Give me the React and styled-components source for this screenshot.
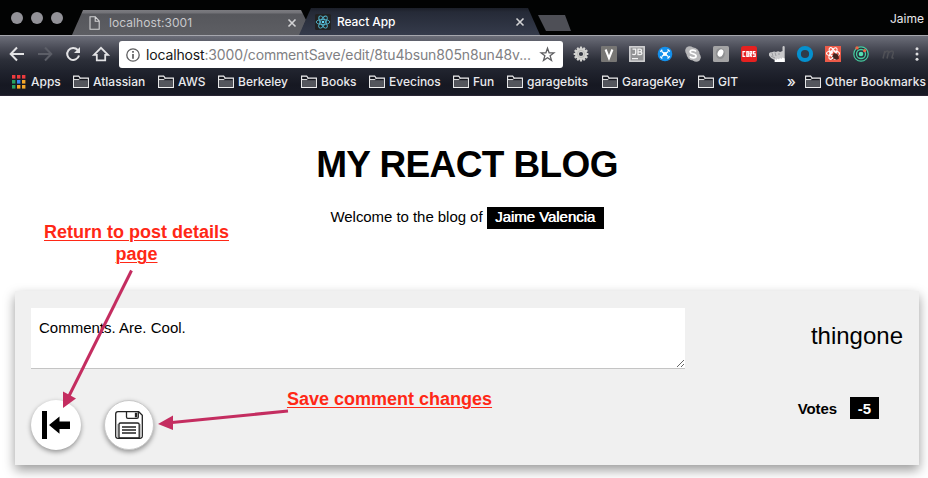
import React from "react";
import styled, { createGlobalStyle } from "styled-components";

const GlobalStyle = createGlobalStyle`
  * { box-sizing: border-box; }
  html, body { margin: 0; padding: 0; background: #fff; overflow: hidden; }
  body { font-family: "Liberation Sans", Arial, Helvetica, sans-serif; color: #000; }
`;

const Screen = styled.div`
  position: relative;
  width: 928px;
  height: 478px;
  overflow: hidden;
  background: #fff;
`;

const Browser = styled.header`
  height: 96px;
  font-family: Inter, "Noto Sans", sans-serif;
  color: #e9e9ec;
  background: #171923;
`;

const TabStrip = styled.div`
  display: flex;
  align-items: flex-end;
  height: 35px;
  padding-left: 11px;
  background: #020303;
`;

const WindowDots = styled.div`
  display: flex;
  gap: 8px;
  width: 61px;
  padding-bottom: 11px;
`;

const Dot = styled.span`
  width: 12px;
  height: 12px;
  border-radius: 50%;
  background: #929298;
`;

const Tab = styled.div`
  display: flex;
  align-items: center;
  flex: none;
  width: ${(p) => (p.$active ? 241 : 234)}px;
  height: ${(p) => (p.$active ? 27 : 25)}px;
  margin-left: ${(p) => (p.$active ? -7 : 0)}px;
  padding: 0 ${(p) => (p.$active ? "16px 0 16px" : "10px 0 17px")};
  color: ${(p) => (p.$active ? "#fff" : "#c8c8cb")};
  font-size: 12px;
  letter-spacing: ${(p) => p.$track}px;
  font-weight: ${(p) => (p.$active ? 500 : 400)};
  background: ${(p) =>
    p.$active
      ? "linear-gradient(#1b1f29 0, #252a37 4px, #353b4b 100%)"
      : "linear-gradient(#7b7b80 0, #727277 3px, #56575c 4px, #5d5e63 100%)"};
  clip-path: ${(p) =>
    p.$active
      ? "polygon(0 100%, 12px 0, 229px 0, 241px 100%)"
      : "polygon(0 100%, 11px 0, 229px 0, 234px 10px, 228px 100%)"};
`;

const TabTitle = styled.span`
  flex: 1;
  margin-left: ${(p) => p.$gap}px;
  line-height: 16px;
  white-space: nowrap;
`;

const NewTab = styled.span`
  width: 33px;
  height: 16px;
  margin: 0 0 4px -2px;
  background: #4e4f56;
  clip-path: polygon(0 0, 27px 0, 33px 100%, 8px 100%);
`;

const Profile = styled.span`
  margin: 0 4px 9px auto;
  font-size: 12px;
  line-height: 15px;
`;

const Toolbar = styled.div`
  display: flex;
  align-items: center;
  height: 35px;
  padding: 3px 3px 0 9px;
  border-top: 1px solid #a5a6ad;
  background: linear-gradient(#6c6e79, #4a4c57 35%, #2c2f39 70%, #22252f);
`;

const NavButtons = styled.div`
  display: flex;
  gap: 12px;
  width: 110px;
  margin-bottom: 1px;
`;

const AddressBar = styled.div`
  display: flex;
  align-items: center;
  width: 444px;
  height: 27px;
  padding: 0 8px 0 7px;
  border-radius: 3px;
  background: #fff;
  color: #808083;
`;

const Url = styled.span`
  flex: 1;
  margin-left: 6px;
  font-size: 14px;
  letter-spacing: ${(p) => p.$track}px;
  line-height: 20px;
  white-space: nowrap;
`;

const Host = styled.span`
  color: #161616;
`;

const Extensions = styled.div`
  display: flex;
  gap: 12px;
  margin: 0 0 1px 10px;
`;

const Bookmarks = styled.nav`
  display: flex;
  align-items: center;
  gap: 13px;
  height: 26px;
  padding: 0 0 2px 12px;
  font-size: 12px;
  font-weight: 500;
  background: linear-gradient(#21242f, #161822 60%, #181a25);
  border-bottom: 1px solid #292533;
`;

const Bookmark = styled.a`
  display: flex;
  align-items: center;
  flex: none;
  gap: ${(p) => p.$gap || 4}px;
  width: ${(p) => p.$width}px;
  letter-spacing: ${(p) => p.$track || 0}px;
  line-height: 16px;
  white-space: nowrap;
`;

const Chevrons = styled.span`
  margin-left: auto;
  margin-right: -4px;
  font-size: 15px;
  line-height: 16px;
`;

const Page = styled.main`
  display: flex;
  flex-direction: column;
  align-items: center;
  height: 382px;
  padding: 48px 9px 0 15px;
`;

const Title = styled.h1`
  margin: 0;
  font-size: 37px;
  font-weight: bold;
  line-height: 42px;
  letter-spacing: ${(p) => p.$track}px;
`;

const Welcome = styled.p`
  display: flex;
  align-items: center;
  gap: 4px;
  height: 22px;
  margin: 21px 0 62px;
  font-size: 15px;
  line-height: 18px;
  letter-spacing: -0.05px;
`;

const WelcomeText = styled.span`
  margin-bottom: 2px;
`;

const Badge = styled.span`
  display: flex;
  justify-content: center;
  align-items: center;
  width: ${(p) => p.$width}px;
  height: 22px;
  padding-bottom: ${(p) => (p.$heavy ? 2 : 0)}px;
  color: #fff;
  background: #000;
  text-shadow: ${(p) => (p.$heavy ? "0.5px 0 0 #fff" : "none")};
`;

const Card = styled.section`
  display: flex;
  justify-content: space-between;
  width: 904px;
  height: 174px;
  padding: 17px 16px 15px;
  background: #f0f0f0;
  box-shadow: 0 5px 11px rgba(0, 0, 0, 0.4);
`;

const Editor = styled.div`
  display: flex;
  flex-direction: column;
  gap: 31px;
`;

const CommentBox = styled.textarea`
  display: block;
  width: 654px;
  height: 61px;
  padding: 11px 8px;
  border: 0;
  border-bottom: 1px solid #c4c4c4;
  outline: 0;
  font: 15px/17px "Liberation Sans", Arial, sans-serif;
  letter-spacing: ${(p) => p.$track}px;
  color: #000;
  background: #fff;
`;

const Actions = styled.div`
  display: flex;
  gap: 23px;
`;

const RoundButton = styled.button`
  display: flex;
  align-items: center;
  justify-content: center;
  width: 50px;
  height: 50px;
  padding: 0;
  border: ${(p) => (p.$outlined ? "1px solid #c9c9c9" : "0")};
  border-radius: 50%;
  background: #fff;
  box-shadow: 0 2px 5px rgba(0, 0, 0, 0.4);
`;

const Meta = styled.aside`
  display: flex;
  flex-direction: column;
  align-items: flex-end;
`;

const Author = styled.span`
  margin-top: 14px;
  font-size: 24px;
  line-height: 28px;
`;

const Votes = styled.div`
  display: flex;
  align-items: center;
  gap: 13px;
  margin: 47px 24px 0 0;
  font-size: 15px;
  font-weight: bold;
`;

const VoteLabel = styled.span`
  letter-spacing: ${(p) => p.$track}px;
`;

const Note = styled.div`
  position: absolute;
  left: ${(p) => p.$x}px;
  top: ${(p) => p.$y}px;
  width: ${(p) => p.$w}px;
  color: #ff2816;
  font-size: 18px;
  font-weight: bold;
  line-height: 22px;
  text-align: center;
  text-decoration: underline;
  text-decoration-thickness: 1px;
  text-underline-offset: 2px;
  white-space: pre-line;
  letter-spacing: ${(p) => p.$track}px;
`;

const Arrows = styled.svg`
  position: absolute;
  left: 0;
  top: 0;
  pointer-events: none;
`;

const Glyph = styled.svg`
  display: block;
  flex: none;
  overflow: visible;
`;

const Icon = ({ w = 16, h = w, children, ...rest }) => (
  <Glyph width={w} height={h} viewBox={`0 0 ${w} ${h}`} fill="none" {...rest}>
    {children}
  </Glyph>
);

const CloseIcon = () => (
  <Icon w={8}>
    <path d="M.5.5l7 7M7.500.5l-7 7" stroke="#d2d2d4" strokeWidth="1.6" />
  </Icon>
);

const FileIcon = () => (
  <Icon w={11} h={14}>
    <path d="M1 .8h5.3L10.2 5v8.3H1zM6.2 1v4.2h4" stroke="#d2d2d4" strokeWidth="1.1" />
  </Icon>
);

const Orbits = ({ cx, cy, rx, ry, color, width }) => (
  <g stroke={color} strokeWidth={width} fill="none">
    {[0, 60, 120].map((a) => (
      <ellipse key={a} cx={cx} cy={cy} rx={rx} ry={ry} transform={`rotate(${a} ${cx} ${cy})`} />
    ))}
  </g>
);

const ReactIcon = () => (
  <Icon>
    <rect width="16" height="16" rx="1.5" fill="#222" />
    <Orbits cx={8} cy={8} rx={6.8} ry={2.6} color="#52b4cc" width={0.9} />
    <circle cx="8" cy="8" r="1.3" fill="#61dafb" />
  </Icon>
);

const FolderIcon = () => (
  <Icon w={16} h={13}>
    <path d="M.6 12.4V1.1h5.1l1.5 2h8.2v9.3z" fill="#14161e" stroke="#f0f0f1" strokeWidth="1.1" />
    <path d="M1.2 5.2h13.7v6.6H1.200z" fill="#54565d" />
    <path d="M.8 4.6h5.1l1.4-1.4" stroke="#f0f0f1" />
  </Icon>
);

const appColors = ["#ed3b3e", "#ed3b3e", "#ed3b3e", "#26a363", "#3585f2", "#f5a72a", "#26a363", "#f5a72a", "#f5a72a"];
const AppsIcon = () => (
  <Icon w={13} h={14}>
    {appColors.map((c, i) => (
      <rect key={i} x={(i % 3) * 5} y={Math.floor(i / 3) * 5} width="3.4" height="3.6" fill={c} />
    ))}
  </Icon>
);

const teeth = Array.from({ length: 12 }, (_, i) => i * 30);

const extensionIcons = [
  <Icon key="gear">
    <g fill="#d3d3d1">
      {teeth.map((a) => (
        <rect key={a} x="6.9" y="0.6" width="2.2" height="4" rx=".5" transform={`rotate(${a} 8 8)`} />
      ))}
    </g>
    <circle cx="8" cy="8" r="4.1" stroke="#d3d3d1" strokeWidth="4" fill="#353842" />
    <circle cx="8" cy="8" r="3.6" stroke="#b0b0ae" strokeWidth=".7" />
  </Icon>,
  <Icon key="v">
    <rect width="16" height="16" rx="1" fill="#777674" />
    <path d="M4.600 3.500l3.400 8.600 3.400-8.600" stroke="#fff" strokeWidth="2.1" />
  </Icon>,
  <Icon key="jb">
    <rect x=".8" y=".8" width="14.4" height="14.4" fill="#929395" stroke="#d4d4d6" strokeWidth="1.5" />
    <path d="M3.500 3.200H6.700V7q0 1.600-1.600 1.600-1.100 0-1.700-.8M9 3.200v5.400h2.200q1.700 0 1.700-1.400 0-1.300-1.700-1.300H9h2q1.500 0 1.500-1.300 0-1.400-1.500-1.400zM3 12.700h6" stroke="#f2f2f2" strokeWidth="1.3" />
  </Icon>,
  <Icon key="hub">
    <circle cx="8" cy="8" r="7.3" fill="#1490ec" />
    <path d="M4.800 5.500l6.400 5M11.200 5.500l-6.400 5M3.300 5.800l2-2M10.500 3.500L12.800 5.500M3.300 10.500l2 2M10.500 12.500L12.800 10.300" stroke="#fff" strokeWidth="1.300" />
    <circle cx="8" cy="8" r="2.1" fill="#fff" />
  </Icon>,
  <Icon key="skype">
    <g fill="#b7b7b9">
      <circle cx="8" cy="8" r="6.5" />
      <circle cx="4.7" cy="4.7" r="4.5" />
      <circle cx="11.3" cy="11.3" r="4.5" />
    </g>
    <path d="M11 5.500C9.800 3.500 5 3.700 5.100 6c.1 2.100 6 1.500 6 3.900 0 2.500-5 2.600-6.200.4" stroke="#fff" strokeWidth="1.7" />
  </Icon>,
  <Icon key="oval">
    <rect width="16" height="16" rx="1.5" fill="#a4a4a5" />
    <ellipse cx="7.3" cy="7.5" rx="4.500" ry="5.500" fill="#8e8f91" />
    <ellipse cx="7.500" cy="7" rx="2.700" ry="3.800" transform="rotate(25 7.5 7)" fill="#fff" />
  </Icon>,
  <Icon key="cors">
    <rect width="16" height="16" rx="2.5" fill="#e62120" />
    <path d="M4.300 5.700H2v4.600h2.300M5.800 5.700h1.500v4.600H5.800zM9 10.900V5.700h1.700v2.200H9l2 2.900M14.500 5.700h-2v2.200h1.700v2.400h-2.200" stroke="#fff" strokeWidth="1.2" />
  </Icon>,
  <Icon key="hand">
    <path d="M0 7.500Q1 5.700 3 6.300 5 4.800 7 6q2-1.500 4-.1L13.500 5V1q.2-1 1.200-1 1 0 1 1v15H5.500v-2L2 12 0 9.500z" fill="#c9c9cb" />
    <path d="M3 7l1 3M6 6.500L7 10M2 10l4 2M10 7v2" stroke="#8e8f94" strokeWidth=".8" />
    <path d="M6 16v-3l1.500 1 1-1.500 1.500 1 1-1.500 1.500 1 1-1.500 2.200 1V16z" fill="#fff" />
  </Icon>,
  <Icon key="ring">
    <circle cx="8" cy="8" r="6.1" stroke="#0590ce" strokeWidth="4" fill="#303b49" />
  </Icon>,
  <Icon key="reactbug">
    <rect width="16" height="16" fill="#ed5b49" />
    <Orbits cx={8} cy={7.5} rx={6.5} ry={2.5} color="#fff" width={1.1} />
    <circle cx="6.5" cy="6.5" r="1.4" fill="#fff" />
    <ellipse cx="10.800" cy="10.500" rx="2.600" ry="3.300" transform="rotate(-35 10.8 10.5)" fill="#44241f" />
    <path d="M7 10.500l7 2M7.500 13.500l6-5M9 7l1 3" stroke="#44241f" strokeWidth=".8" />
  </Icon>,
  <Icon key="target">
    <circle cx="8" cy="8" r="7.2" stroke="#46cda0" strokeWidth="1.2" fill="#27303a" />
    <circle cx="8" cy="8" r="4.5" stroke="#46cda0" strokeWidth="1.3" />
    <circle cx="8" cy="8" r="2.3" fill="#55dfb1" />
    <circle cx="4" cy="1.900" r="1.700" fill="#ef6746" />
    <circle cx="11.6" cy="4.6" r="1.6" fill="#ef6746" />
  </Icon>,
  <Icon key="m">
    <path d="M2 12.500L3.800 5M3.300 7.400c2-3 4.700-3.100 4-.4L6 12.500M7.200 7.400c2.300-3.300 5.900-3.100 5 0l-1.200 3.800q-.3 1.200 1.700.7" stroke="#505157" strokeWidth="1.500" />
  </Icon>,
  <Icon key="menu">
    <g fill="#dfdfe1">
      <circle cx="8" cy="2.8" r="1.5" />
      <circle cx="8" cy="8" r="1.5" />
      <circle cx="8" cy="13.2" r="1.5" />
    </g>
  </Icon>,
];

const bookmarks = [
  ["Atlassian", 72],
  ["AWS", 47],
  ["Berkeley", 70],
  ["Books", 55],
  ["Evecinos", 71],
  ["Fun", 41],
  ["garagebits", 82],
  ["GarageKey", 83],
  ["GIT", 41],
];

export default function App() {
  return (
    <>
      <GlobalStyle />
      <Screen>
        <Browser>
          <TabStrip>
            <WindowDots>
              <Dot />
              <Dot />
              <Dot />
            </WindowDots>
            <Tab $track={0.07}>
              <FileIcon />
              <TabTitle $gap={9}>localhost:3001</TabTitle>
              <CloseIcon />
            </Tab>
            <Tab $active $track={-0.08}>
              <ReactIcon />
              <TabTitle $gap={6}>React App</TabTitle>
              <CloseIcon />
            </Tab>
            <NewTab />
            <Profile>Jaime</Profile>
          </TabStrip>
          <Toolbar>
            <NavButtons>
              <Icon>
                <path d="M15 8H2M8 1.500L1.700 8 8 14.500" stroke="#e3e3e5" strokeWidth="2" />
              </Icon>
              <Icon>
                <path d="M1 8h13M8 1.500L14.300 8 8 14.500" stroke="#5c5e67" strokeWidth="2" />
              </Icon>
              <Icon>
                <path d="M12.700 4A6 6 0 1 0 14 9.500" stroke="#e3e3e5" strokeWidth="2" />
                <path d="M15 1v6H9z" fill="#e3e3e5" />
              </Icon>
              <Icon>
                <path d="M1 8.800L8 1.800l7 7h-2.800v5.600H3.800V8.800z" stroke="#e3e3e5" strokeWidth="1.8" />
              </Icon>
            </NavButtons>
            <AddressBar>
              <Icon w={14}>
                <circle cx="7" cy="7" r="6.2" stroke="#5d5d5f" strokeWidth="1.3" />
                <path d="M7 6v4.700M7 3.100v1.700" stroke="#5d5d5f" strokeWidth="1.7" />
              </Icon>
              <Url $track={-0.15}>
                <Host>localhost</Host>:3000/commentSave/edit/8tu4bsun805n8un48v...
              </Url>
              <Icon w={15}>
                <path d="M7.500 1.300l1.600 4.500 4.800.1-3.800 2.900 1.400 4.600-4-2.700-4 2.700 1.400-4.600L1.100 5.900l4.800-.1z" stroke="#5f5f62" strokeWidth="1.3" />
              </Icon>
            </AddressBar>
            <Extensions>{extensionIcons}</Extensions>
          </Toolbar>
          <Bookmarks>
            <Bookmark $width={48} $gap={6}>
              <AppsIcon />
              Apps
            </Bookmark>
            {bookmarks.map(([name, width]) => (
              <Bookmark key={name} $width={width}>
                <FolderIcon />
                {name}
              </Bookmark>
            ))}
            <Chevrons>»</Chevrons>
            <Bookmark $width={123} $track={0.07}>
              <FolderIcon />
              Other Bookmarks
            </Bookmark>
          </Bookmarks>
        </Browser>
        <Page>
          <Title $track={-0.62}>MY REACT BLOG</Title>
          <Welcome>
            <WelcomeText>Welcome to the blog of</WelcomeText>
            <Badge $width={117} $heavy>
              Jaime Valencia
            </Badge>
          </Welcome>
          <Card>
            <Editor>
              <CommentBox $track={0} defaultValue="Comments. Are. Cool." />
              <Actions>
                <RoundButton aria-label="Back">
                  <Icon w={28}>
                    <path d="M0 0h5v28H0z" fill="#000" />
                    <path d="M7 14L17.500 5.500v5H28v7.500H17.500v4.700z" fill="#000" />
                  </Icon>
                </RoundButton>
                <RoundButton $outlined aria-label="Save">
                  <Icon w={28}>
                    <path d="M.7 3Q.7.7 3 .7h20.700l3.600 3.600v20.500q0 2.500-2.500 2.500H3q-2.300 0-2.300-2.300z" fill="#fff" stroke="#222" strokeWidth="1.3" />
                    <path d="M1.600 13h2v13h-2zM25 13h1.700v13H25z" fill="#c4c4c4" />
                    <path d="M4 27V13.200Q4 12 5.500 12h17q1.700 0 1.700 1.500V27zM7 16h14M7 19h14M7 22h14" stroke="#222" strokeWidth="1.3" />
                    <path d="M11.500 1v5q0 1.400 1.400 1.400h9q1.400 0 1.400-1.400V1M20.500 2.500h1V5.500h-1z" stroke="#222" strokeWidth="1.3" />
                  </Icon>
                </RoundButton>
              </Actions>
            </Editor>
            <Meta>
              <Author>thingone</Author>
              <Votes>
                <VoteLabel $track={-0.1}>Votes</VoteLabel>
                <Badge $width={29}>-5</Badge>
              </Votes>
            </Meta>
          </Card>
        </Page>
        <Note $x={36} $y={221} $w={201} $track={0}>
          {"Return to post details\npage"}
        </Note>
        <Note $x={280} $y={388} $w={219} $track={0}>
          Save comment changes
        </Note>
        <Arrows width="928" height="478" viewBox="0 0 928 478" aria-hidden="true">
          <g stroke="#c42d60" strokeWidth="3" fill="#c42d60">
            <path d="M131.500 270.500L69 396" />
            <path d="M63 391.500L76 398.500 63 408z" stroke="none" />
            <path d="M288 411L172 422.500" />
            <path d="M158 424L173 415.500V430z" stroke="none" />
          </g>
        </Arrows>
      </Screen>
    </>
  );
}
